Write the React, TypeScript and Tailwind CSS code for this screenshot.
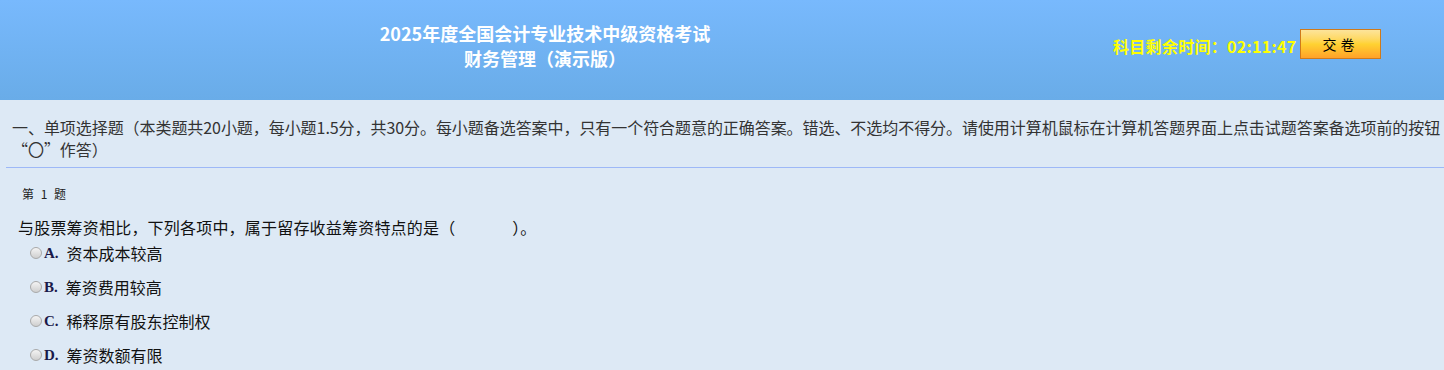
import React from 'react';

const cjk = { fontFamily: '"Noto Sans CJK SC", "Noto Sans", sans-serif' };

const options = [
  { key: 'A', text: '资本成本较高' },
  { key: 'B', text: '筹资费用较高' },
  { key: 'C', text: '稀释原有股东控制权' },
  { key: 'D', text: '筹资数额有限' },
];

const Radio: React.FC = () => (
  <span className="inline-block w-[12px] h-[12px] rounded-full border border-[#a9a9a9] bg-gradient-to-b from-[#f4f4f4] to-[#cfcfcf] shrink-0" />
);

export default function App() {
  return (
    <div className="w-[1444px] h-[370px] overflow-hidden bg-[#dde9f5]" style={cjk}>
      {/* top bar */}
      <div className="h-[100px] flex bg-gradient-to-b from-[#78b9fd] to-[#69ace8]">
        <div className="w-[1090px] flex justify-center pt-[21px]">
          <div className="text-white font-bold text-[18px] leading-[25px] text-center">
            <div>2025年度全国会计专业技术中级资格考试</div>
            <div>财务管理（演示版）</div>
          </div>
        </div>
        <div className="flex items-start pt-[29px] pl-[23px]">
          <div className="flex items-center h-[30px]">
            <span className="w-[182px] text-[#ffff00] font-bold text-[16px] tracking-[0.3px] mt-[3px] whitespace-nowrap">
              科目剩余时间：02:11:47
            </span>
            <button className="ml-[5px] w-[81px] h-[30px] border border-[#d07a1a] bg-gradient-to-b from-[#fde49a] via-[#ffd232] to-[#ffa128] text-black text-[14px] tracking-[4px]">
              交卷
            </button>
          </div>
        </div>
      </div>

      {/* section heading */}
      <div className="ml-[6px] border-b border-[#9db8f7] pt-[16px] pb-[7px]">
        <div className="pl-[6px] text-[16px] leading-[22px] text-[#333] tracking-[-0.06px]">
          <div className="whitespace-nowrap">
            一、单项选择题（本类题共20小题，每小题1.5分，共30分。每小题备选答案中，只有一个符合题意的正确答案。错选、不选均不得分。请使用计算机鼠标在计算机答题界面上点击试题答案备选项前的按钮
          </div>
          <div>“〇”作答）</div>
        </div>
      </div>

      {/* question */}
      <div className="pl-[18px]">
        <div className="pl-[4px] mt-[18px] text-[12px] leading-[16px] text-[#222] tracking-[2px]">第&nbsp;1&nbsp;题</div>
        <div className="mt-[14px] text-[16px] leading-[22px] text-[#111] tracking-[0.2px]">
          与股票筹资相比，下列各项中，属于留存收益筹资特点的是（&nbsp;&nbsp;&nbsp;&nbsp;&nbsp;&nbsp;&nbsp;&nbsp;&nbsp;&nbsp;&nbsp;&nbsp;&nbsp;&nbsp;&nbsp;）。
        </div>
        <div className="flex flex-col gap-[4px] pl-[12px]">
          {options.map((o) => (
            <div key={o.key} className="h-[30px] flex items-center">
              <Radio />
              <span
                className="ml-[2px] font-bold text-[15px] text-[#1a1a4a]"
                style={{ fontFamily: '"Liberation Serif", serif' }}
              >
                {o.key}.
              </span>
              <span className="ml-[8px] text-[16px] text-[#111]">{o.text}</span>
            </div>
          ))}
        </div>
      </div>
    </div>
  );
}
